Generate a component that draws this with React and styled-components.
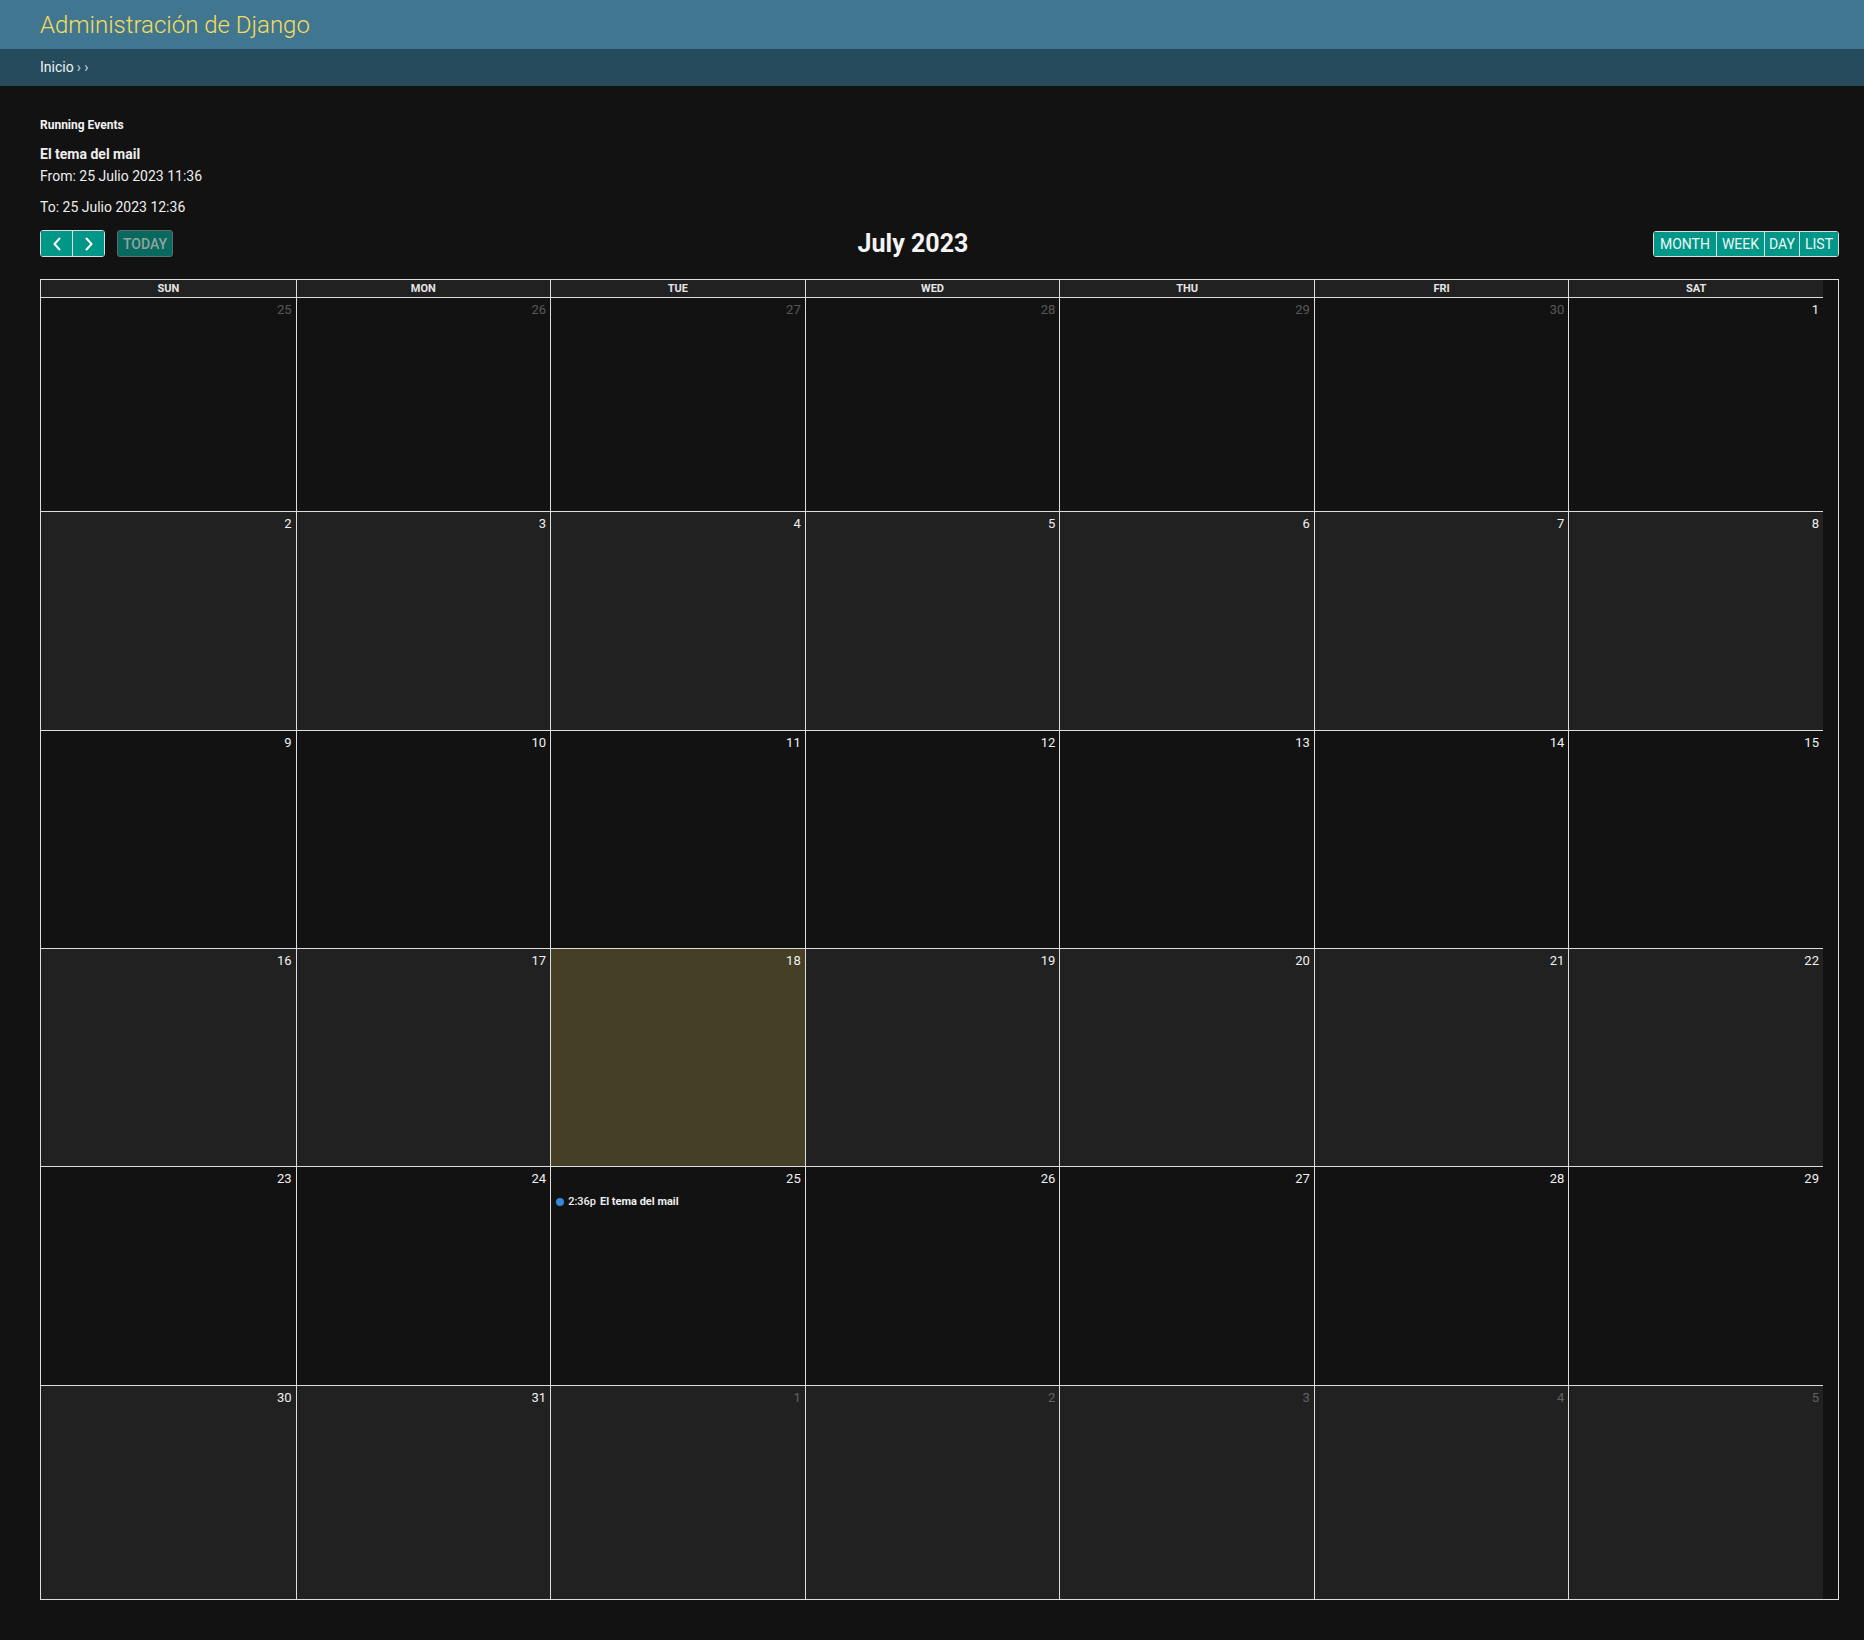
import React from "react";
import styled, { createGlobalStyle } from "styled-components";

const Global = createGlobalStyle`
  html, body { margin: 0; padding: 0; background: #121212; }
  body { font-family: Roboto, "Noto Sans", "Liberation Sans", sans-serif; color: #eeeeee; font-size: 14px; }
  * { box-sizing: border-box; }
`;

const Header = styled.header`
  height: 49px;
  background: #417690;
  display: flex;
  align-items: center;
  padding: 1px 40px 0;
`;

const Brand = styled.h1`
  margin: 0;
  font-size: 24px;
  font-weight: 300;
  color: #f5dd5d;
  line-height: 1;
`;

const Breadcrumbs = styled.nav`
  height: 37px;
  background: #264b5d;
  display: flex;
  align-items: center;
  padding: 0 40px 2px;
  font-size: 14px;
  color: #c4dce8;
`;

const Crumb = styled.a`
  color: #eef4f7;
  text-decoration: none;
  margin-right: 3px;
`;

const Content = styled.main`
  padding: 31px 25px 40px 40px;
`;

const RunningTitle = styled.h2`
  margin: 0 0 11px;
  font-size: 12px;
  line-height: 16px;
  font-weight: 700;
  color: #f2f2f2;
`;

const EventName = styled.div`
  font-size: 14px;
  line-height: 20px;
  font-weight: 700;
  color: #eeeeee;
`;

const EventLine = styled.p`
  margin: ${(p) => p.$mt}px 0 0;
  font-size: 14px;
  line-height: 20px;
  color: #eeeeee;
`;

const Toolbar = styled.div`
  margin-top: 13px;
  display: flex;
  justify-content: space-between;
  align-items: center;
  height: 27px;
`;

const Chunk = styled.div`
  display: flex;
  align-items: center;
  gap: 12px;
`;

const Group = styled.div`
  display: flex;
  border: 1px solid #dddddd;
  border-radius: 3px;
  overflow: hidden;
  height: ${(p) => p.$h || 27}px;
`;

const Btn = styled.button`
  font-family: Roboto, "Liberation Sans", sans-serif;
  font-size: 14px;
  text-transform: uppercase;
  background: #009688;
  color: #f0f8f7;
  border: 0;
  border-left: ${(p) => (p.$first ? "0" : "1px solid #dddddd")};
  padding: 0 ${(p) => p.$px || 5}px;
  width: ${(p) => (p.$w ? p.$w + "px" : "auto")};
  display: flex;
  align-items: center;
  justify-content: center;
  cursor: pointer;
  line-height: 1;
`;

const TodayBtn = styled.button`
  font-family: Roboto, "Liberation Sans", sans-serif;
  font-size: 14px;
  font-weight: 500;
  background: #08695f;
  color: #93a39f;
  border: 1px solid #5e6b69;
  border-radius: 3px;
  height: 27px;
  padding: 0 5px;
  line-height: 1;
`;

const Title = styled.h2`
  margin: 0;
  font-size: 25px;
  font-weight: 700;
  color: #f4f4f4;
  line-height: 1;
`;

const Calendar = styled.div`
  margin-top: 22px;
  border: 1px solid #dddddd;
`;

const Inner = styled.div`
  width: calc(100% - 15px);
`;

const HeadRow = styled.div`
  display: grid;
  grid-template-columns: repeat(7, 1fr);
  background: #212121;
`;

const HeadCell = styled.div`
  height: 18px;
  line-height: 17px;
  text-align: center;
  font-size: 11px;
  font-weight: 700;
  color: #e6e6e6;
  border-bottom: 1px solid #dddddd;
  border-left: ${(p) => (p.$first ? "0" : "1px solid #dddddd")};
`;

const WeekRow = styled.div`
  display: grid;
  grid-template-columns: repeat(7, 1fr);
  background: ${(p) => (p.$alt ? "#212121" : "#121212")};
`;

const DayCell = styled.div`
  border-left: ${(p) => (p.$firstCol ? "0" : "1px solid #dddddd")};
  border-bottom: ${(p) => (p.$lastRow ? "0" : "1px solid #dddddd")};
  background: ${(p) => (p.$today ? "#453f26" : "transparent")};
  padding: 4px 4px 0 0;
  display: flex;
  flex-direction: column;
  min-width: 0;
`;

const DayNum = styled.div`
  text-align: right;
  font-size: 13px;
  line-height: 15px;
  color: #f0f0f0;
  opacity: ${(p) => (p.$other ? 0.3 : 1)};
`;

const Event = styled.div`
  margin-top: 8px;
  padding-left: 5px;
  display: flex;
  align-items: center;
  gap: 4px;
  font-size: 11px;
  line-height: 16px;
  color: #eeeeee;
  white-space: nowrap;
`;

const Dot = styled.span`
  width: 8px;
  height: 8px;
  border-radius: 50%;
  background: #3788d8;
  flex: none;
`;

const EvTime = styled.span`
  font-weight: 500;
`;

const EvTitle = styled.span`
  font-weight: 700;
`;

const Chevron = ({ dir }) => (
  <svg width="10" height="14" viewBox="0 0 10 14" fill="none">
    <polyline
      points={dir === "left" ? "7.5,1.5 2.5,7 7.5,12.5" : "2.5,1.5 7.5,7 2.5,12.5"}
      stroke="#ffffff"
      strokeWidth="2"
      strokeLinecap="round"
      strokeLinejoin="round"
    />
  </svg>
);

const days = ["SUN", "MON", "TUE", "WED", "THU", "FRI", "SAT"];

const mk = (n, other = false) => ({ n, other });
const weeks = [
  [mk(25, true), mk(26, true), mk(27, true), mk(28, true), mk(29, true), mk(30, true), mk(1)],
  [2, 3, 4, 5, 6, 7, 8].map((n) => mk(n)),
  [9, 10, 11, 12, 13, 14, 15].map((n) => mk(n)),
  [16, 17, 18, 19, 20, 21, 22].map((n) => mk(n)),
  [23, 24, 25, 26, 27, 28, 29].map((n) => mk(n)),
  [mk(30), mk(31), mk(1, true), mk(2, true), mk(3, true), mk(4, true), mk(5, true)],
];
const heights = [214, 219, 218, 218, 219, 213];

export default function App() {
  return (
    <>
      <Global />
      <Header>
        <Brand>Administración de Django</Brand>
      </Header>
      <Breadcrumbs>
        <Crumb href="#">Inicio</Crumb> › ›
      </Breadcrumbs>
      <Content>
        <RunningTitle>Running Events</RunningTitle>
        <EventName>El tema del mail</EventName>
        <EventLine $mt={2}>From: 25 Julio 2023 11:36</EventLine>
        <EventLine $mt={11}>To: 25 Julio 2023 12:36</EventLine>
        <Toolbar>
          <Chunk>
            <Group>
              <Btn $first $w={31} aria-label="prev">
                <Chevron dir="left" />
              </Btn>
              <Btn $w={32} aria-label="next">
                <Chevron dir="right" />
              </Btn>
            </Group>
            <TodayBtn disabled>TODAY</TodayBtn>
          </Chunk>
          <Title>July 2023</Title>
          <Chunk>
            <Group $h={26}>
              <Btn $first $px={6}>Month</Btn>
              <Btn $px={5}>Week</Btn>
              <Btn $px={4}>Day</Btn>
              <Btn $px={5}>List</Btn>
            </Group>
          </Chunk>
        </Toolbar>
        <Calendar>
          <Inner>
            <HeadRow>
              {days.map((d, i) => (
                <HeadCell key={d} $first={i === 0}>
                  {d}
                </HeadCell>
              ))}
            </HeadRow>
            {weeks.map((w, wi) => (
              <WeekRow key={wi} $alt={wi % 2 === 1} style={{ height: heights[wi] }}>
                {w.map((d, di) => (
                  <DayCell
                    key={di}
                    $firstCol={di === 0}
                    $lastRow={wi === weeks.length - 1}
                    $today={wi === 3 && di === 2}
                  >
                    <DayNum $other={d.other}>{d.n}</DayNum>
                    {wi === 4 && di === 2 && (
                      <Event>
                        <Dot />
                        <EvTime>2:36p</EvTime>
                        <EvTitle>El tema del mail</EvTitle>
                      </Event>
                    )}
                  </DayCell>
                ))}
              </WeekRow>
            ))}
          </Inner>
        </Calendar>
      </Content>
    </>
  );
}
